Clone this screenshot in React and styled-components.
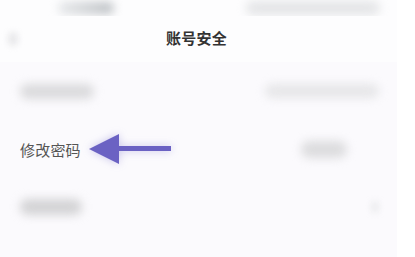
import React from 'react';
import styled, { createGlobalStyle } from 'styled-components';

const GlobalStyle = createGlobalStyle`
  html, body {
    margin: 0;
    padding: 0;
    background: #ffffff;
    font-family: "Noto Sans CJK SC", "Noto Sans", sans-serif;
  }
`;

const Screen = styled.div`
  width: 397px;
  height: 257px;
  background: #fbfafd;
  display: flex;
  flex-direction: column;
  overflow: hidden;
`;

const StatusBar = styled.div`
  height: 16px;
  display: flex;
  align-items: center;
  justify-content: space-between;
  padding: 0 17px 0 58px;
  background: #fdfdfe;
`;

const Smudge = styled.div`
  width: ${p => p.w}px;
  height: ${p => p.h}px;
  margin-right: ${p => p.mr || 0}px;
  border-radius: ${p => p.h / 2}px;
  background: ${p => p.tone};
  filter: blur(${p => p.blur || 5}px);
  flex-shrink: 0;
`;

const NavBar = styled.div`
  height: 46px;
  display: flex;
  align-items: center;
  padding: 0 8px;
  position: relative;
  background: #fdfdfe;
`;

const Title = styled.div`
  position: absolute;
  left: 0;
  right: 0;
  top: 11px;
  text-align: center;
  font-size: 15px;
  font-weight: 700;
  color: #333333;
  letter-spacing: 0.3px;
  padding-right: 4px;
`;

const List = styled.div`
  display: flex;
  flex-direction: column;
`;

const Row = styled.div`
  height: 58px;
  display: flex;
  align-items: center;
  justify-content: space-between;
  padding: 0 18px 0 20px;
`;

const Left = styled.div`
  display: flex;
  align-items: center;
  gap: 8px;
`;

const Label = styled.span`
  font-size: 15px;
  color: #555555;
  letter-spacing: 0.2px;
`;

const Arrow = () => (
  <svg width="84" height="32" viewBox="0 0 84 32" style={{ filter: 'drop-shadow(0 0 4px rgba(110,100,200,0.35))' }}>
    <polygon points="0,16 30,1 30,31" fill="#6b62c3" />
    <rect x="28" y="13" width="54" height="5" fill="#6b62c3" />
  </svg>
);

export default function App() {
  return (
    <>
      <GlobalStyle />
      <Screen>
        <StatusBar>
          <Smudge w={56} h={12} tone="linear-gradient(90deg, #e6e8ea, #b9bdc1)" />
          <Smudge w={134} h={14} tone="#e4e5e7" />
        </StatusBar>
        <NavBar>
          <Smudge w={10} h={14} tone="#e8e8ea" blur={3} />
          <Title>账号安全</Title>
        </NavBar>
        <List>
          <Row>
            <Smudge w={74} h={15} tone="#dadadc" />
            <Smudge w={114} h={14} tone="#e6e6e8" />
          </Row>
          <Row>
            <Left>
              <Label>修改密码</Label>
              <Arrow />
            </Left>
            <Smudge w={46} h={17} tone="#dcdcde" mr={32} />
          </Row>
          <Row>
            <Smudge w={62} h={16} tone="#d3d3d5" />
            <Smudge w={8} h={12} tone="#ececee" blur={3} />
          </Row>
        </List>
      </Screen>
    </>
  );
}
